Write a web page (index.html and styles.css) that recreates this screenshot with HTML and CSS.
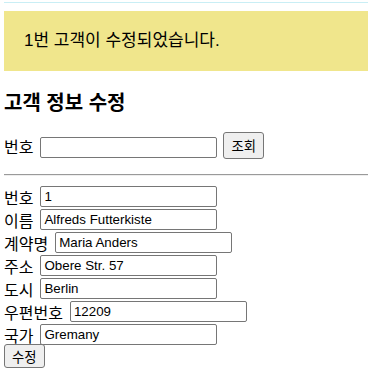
FILE: index.html
```
<!DOCTYPE html>
<html lang="ko">

<head>
  <meta charset="UTF-8">
  <meta name="viewport" content="width=device-width, initial-scale=1.0">
  <title>고객 정보 수정</title>
  <link rel="stylesheet" href="styles.css">
</head>

<body>
  <div class="topline"></div>

  <div class="alert">1번 고객이 수정되었습니다.</div>

  <h3>고객 정보 수정</h3>

  <form class="search">
    <label>번호</label>
    <input type="text">
    <button type="button">조회</button>
  </form>

  <hr>

  <form class="edit">
    <div class="row"><label>번호</label> <input type="text" value="1"></div>
    <div class="row"><label>이름</label> <input type="text" value="Alfreds Futterkiste"></div>
    <div class="row"><label>계약명</label> <input type="text" value="Maria Anders"></div>
    <div class="row"><label>주소</label> <input type="text" value="Obere Str. 57"></div>
    <div class="row"><label>도시</label> <input type="text" value="Berlin"></div>
    <div class="row"><label>우편번호</label> <input type="text" value="12209"></div>
    <div class="row"><label>국가</label> <input type="text" value="Gremany"></div>
    <button type="button" class="save">수정</button>
  </form>
</body>

</html>
```

FILE: styles.css
```
body {
  font-family: 'Liberation Sans', 'Noto Sans CJK KR', sans-serif;
  font-size: 16px;
  color: #000;
  margin: 0 4px 0 4px;
  overflow: hidden;
}

.topline {
  height: 1px;
  margin: 2px -4px 0;
  background-color: #c9eef5;
}

.alert {
  background-color: #f0e68c;
  margin: 8px -40px 0 -1px;
  padding: 0 20px 0 21px;
  height: 60px;
  line-height: 60px;
  font-size: 17px;
}

h3 {
  font-size: 20px;
  font-weight: bold;
  margin: 20px 0 17px;
  line-height: 24px;
}

.search {
  display: flex;
  align-items: center;
  gap: 7px;
  height: 27px;

  input {
    width: 177px;
    height: 21px;
    box-sizing: border-box;
    margin: 4px 0 0;
    padding: 1px 2px;
    border: 1px solid #767676;
    border-radius: 2px;
  }

  button {
    margin-left: -1px;
    height: 27px;
  }
}

hr {
  margin: 15px -4px 9px -1px;
  border: 0;
  border-top: 1px solid #9a9a9a;
  border-bottom: 1px solid #eee;
}

.row {
  display: flex;
  align-items: center;
  gap: 7px;
  height: 23px;

  input {
    width: 177px;
    height: 21px;
    box-sizing: border-box;
    margin: 0;
    padding: 1px 3px;
    border: 1px solid #767676;
    border-radius: 2px;
    font-family: 'Liberation Sans', sans-serif;
    font-size: 13.33px;
    color: #000;
  }
}

button {
  font-family: 'Liberation Sans', 'Noto Sans CJK KR', sans-serif;
  font-size: 13.33px;
  background-color: #efefef;
  border: 1px solid #767676;
  border-radius: 3px;
  padding: 0 7px;
  height: 25px;
  color: #000;
}

.save {
  margin-top: -2px;
  height: 24px;
}
```
